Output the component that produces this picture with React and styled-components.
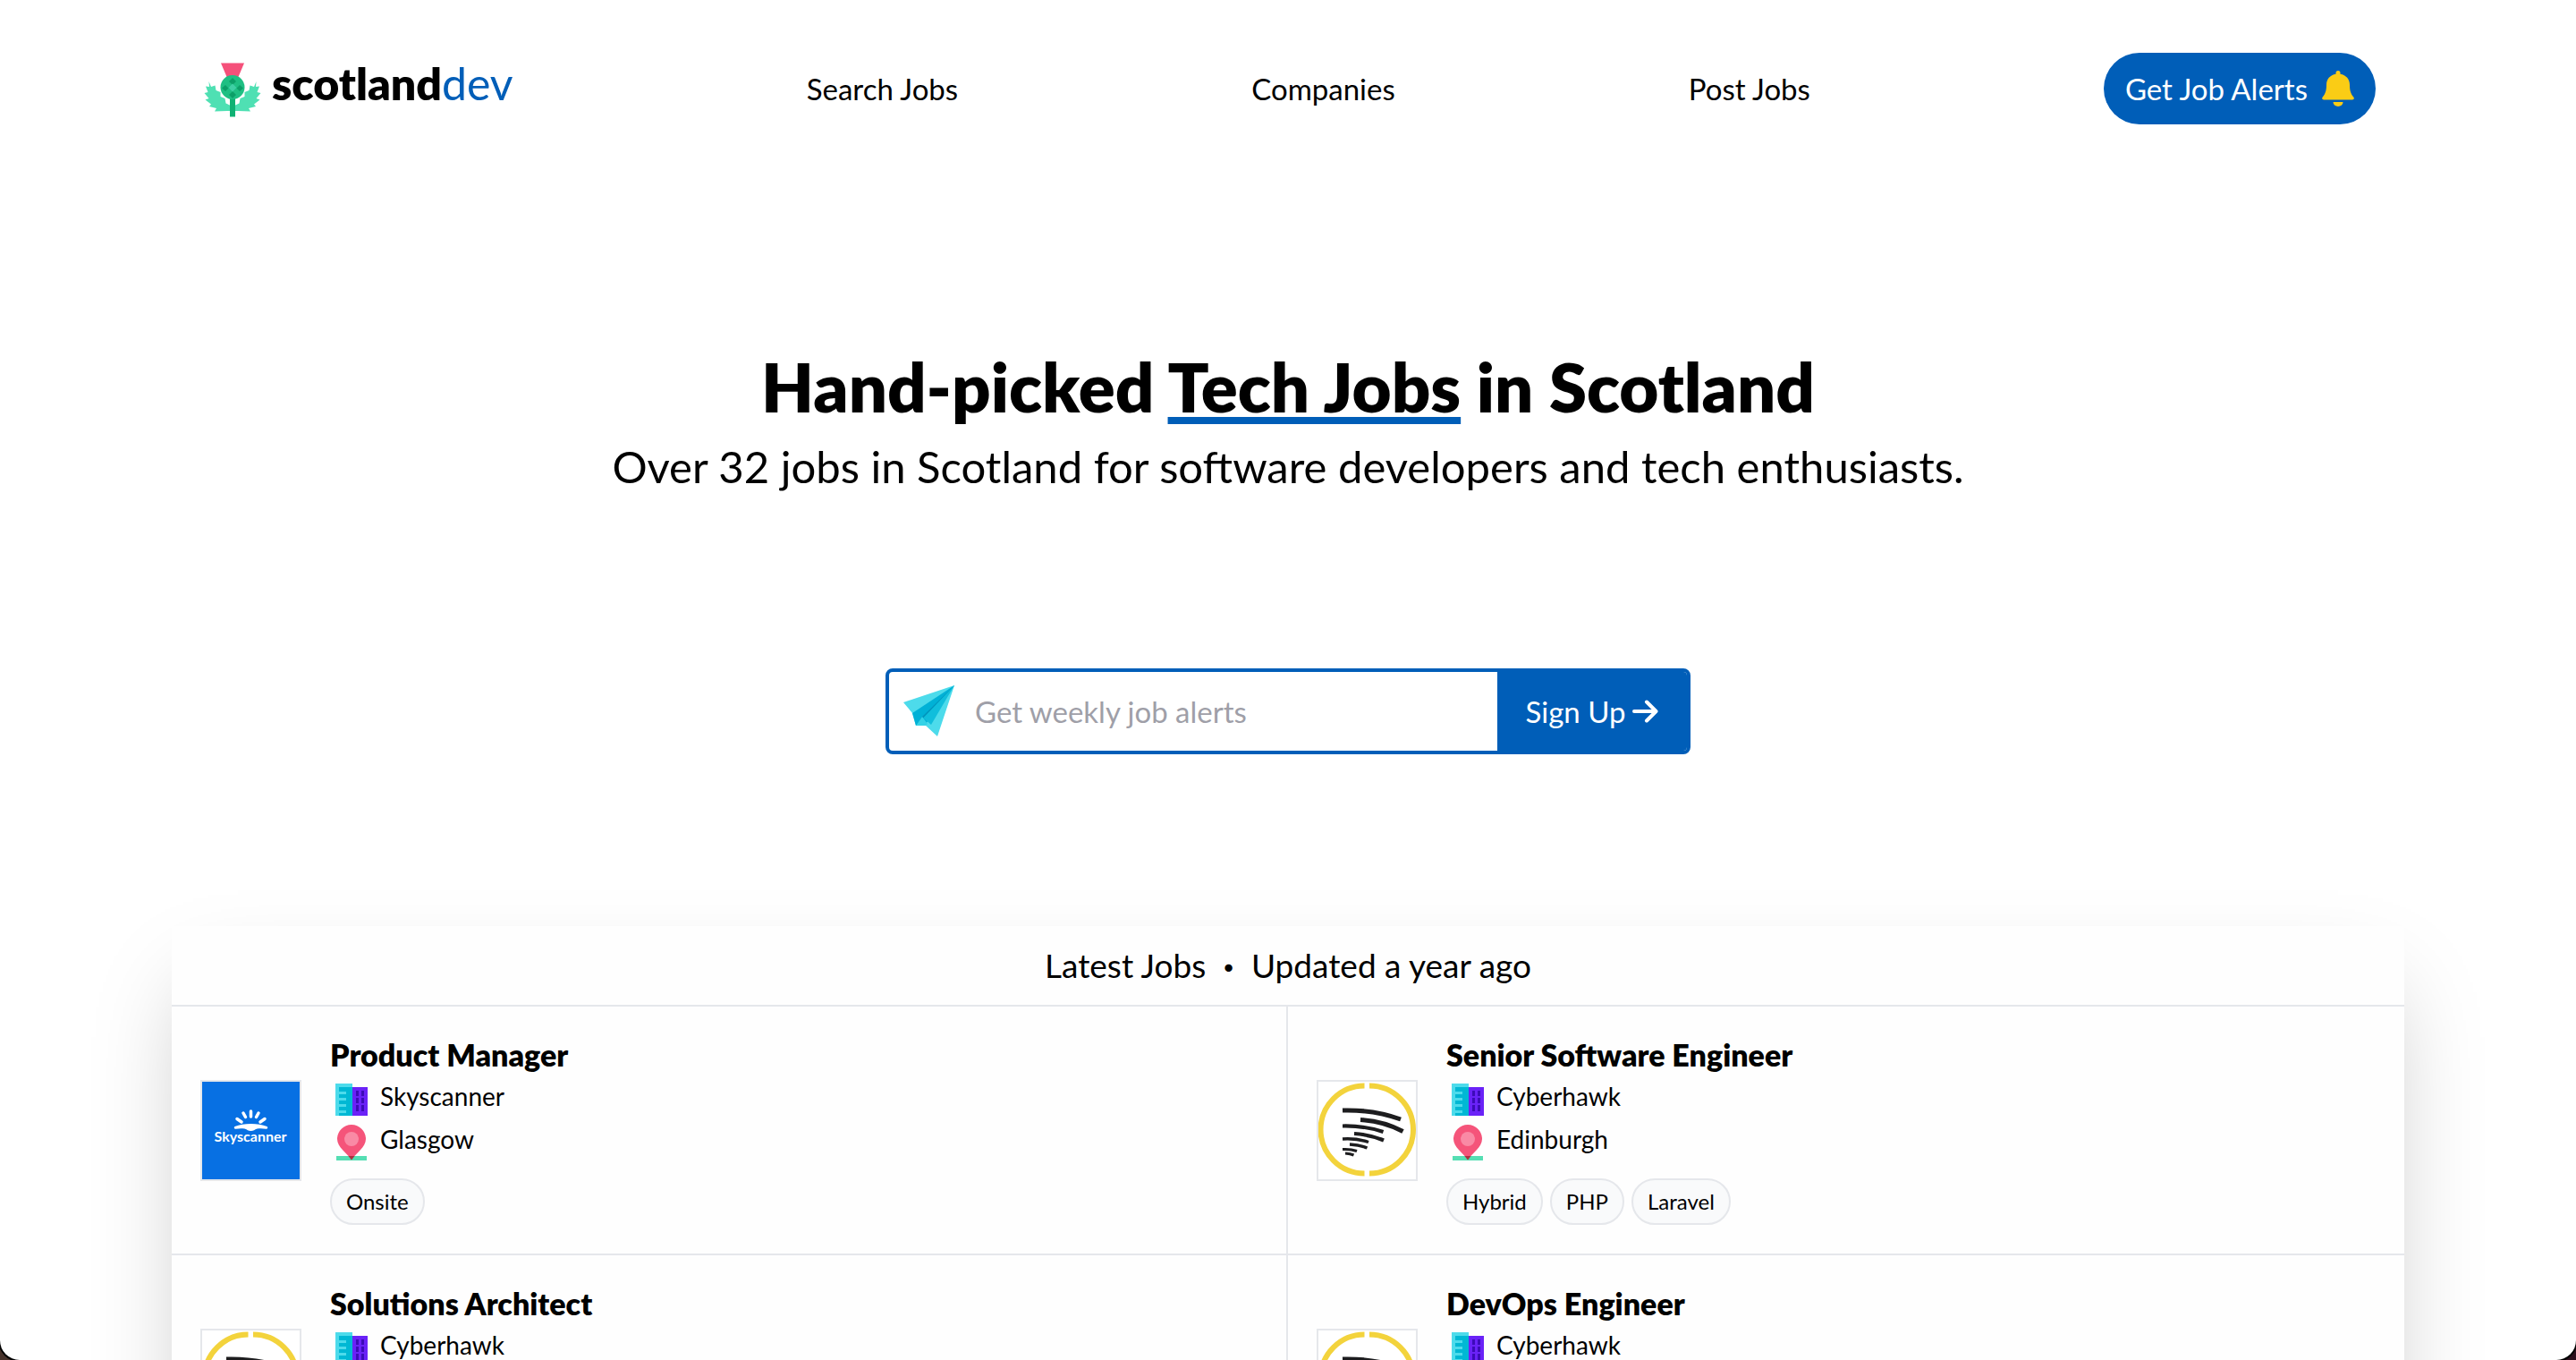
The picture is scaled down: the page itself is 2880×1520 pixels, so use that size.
import React from "react";
import styled, { createGlobalStyle } from "styled-components";

const blue = "#005eb8";
const line = "#e5e7eb";

const GlobalStyle = createGlobalStyle`
  *, *::before, *::after { box-sizing: border-box; }
  body {
    margin: 0;
    background: linear-gradient(90deg, #47332b, #2b0e1c);
    color: #000;
    font-family: Lato, "Noto Sans", sans-serif;
    font-size: 33px;
  }
  h1, h2, h3, p, ul { margin: 0; padding: 0; }
  ul { list-style: none; }
  a { color: inherit; text-decoration: none; }
  svg { display: block; flex: none; }
`;

const Window = styled.div`
  height: 100vh;
  overflow: hidden;
  background: #fff;
  border-radius: 0 0 22px 22px;
  box-shadow: 0 0 0 2px #000;
`;

const Header = styled.header`
  padding: 59px 224px 0;
`;

const Nav = styled.nav`
  display: flex;
  align-items: center;
  justify-content: space-between;
  height: 80px;
`;

const NavLink = styled.a`
  line-height: 48px;
`;

const Brand = styled.a`
  display: flex;
  align-items: flex-start;
  gap: 8px;
`;

const BrandName = styled.span`
  font-size: 50px;
  line-height: 60px;
  font-weight: 800;
`;

const BrandSuffix = styled.span`
  font-weight: 400;
  color: ${blue};
`;

const AlertsButton = styled.button`
  display: flex;
  align-items: center;
  gap: 16px;
  height: 80px;
  padding: 0 24px;
  border: 0;
  border-radius: 40px;
  background: ${blue};
  color: #fff;
  font: inherit;
`;

const Hero = styled.section`
  display: flex;
  flex-direction: column;
  align-items: center;
  padding-top: 253px;
  text-align: center;
`;

const Headline = styled.h1`
  font-size: 76px;
  line-height: 80px;
  font-weight: 800;
`;

const Marked = styled.span`
  text-decoration: underline ${blue} 8px;
  text-underline-offset: 5px;
  text-decoration-skip-ink: none;
`;

const Tagline = styled.p`
  margin-top: 12px;
  font-size: 49px;
  line-height: 74px;
`;

const SignUpForm = styled.form`
  display: flex;
  width: 900px;
  height: 96px;
  margin-top: 189px;
  border: 4px solid ${blue};
  border-radius: 8px;
  overflow: hidden;
`;

const EmailField = styled.label`
  display: flex;
  flex: 1;
  align-items: center;
  gap: 20px;
  padding-left: 16px;
`;

const EmailInput = styled.input`
  flex: 1;
  min-width: 0;
  height: 100%;
  padding: 0;
  border: 0;
  outline: 0;
  background: transparent;
  font: inherit;
  &::placeholder { color: #9f9fa8; opacity: 1; }
`;

const SubmitButton = styled.button`
  display: flex;
  align-items: center;
  justify-content: center;
  gap: 8px;
  width: 212px;
  border: 0;
  background: ${blue};
  color: #fff;
  font: inherit;
`;

const Board = styled.section`
  margin: 192px 192px 0;
  background: #fefefe;
  box-shadow: 0 50px 100px -24px rgba(0, 0, 0, 0.25);
`;

const BoardTitle = styled.h2`
  display: flex;
  justify-content: center;
  gap: 20px;
  padding: 16px 0;
  border-bottom: 2px solid ${line};
  font-size: 37px;
  line-height: 56px;
  font-weight: 400;
`;

const Dot = styled.span`
  font-weight: 800;
`;

const JobGrid = styled.ul`
  display: grid;
  grid-template-columns: 1fr 1fr;
`;

const JobCell = styled.li`
  border-bottom: 2px solid ${line};
  &:nth-child(odd) { border-right: 2px solid ${line}; }
`;

const JobLink = styled.a`
  display: flex;
  align-items: center;
  gap: 32px;
  padding: 32px;
`;

const LogoFrame = styled.span`
  border: 2px solid ${line};
  background: #fff;
`;

const JobTitle = styled.h3`
  font-size: 34px;
  line-height: 44px;
  font-weight: 800;
`;

const Detail = styled.p`
  display: flex;
  align-items: center;
  gap: 8px;
  height: 48px;
  font-size: 28px;
  line-height: 48px;
`;

const Tags = styled.ul`
  display: flex;
  gap: 8px;
  margin-top: 20px;
`;

const Tag = styled.li`
  padding: 0 16px;
  border: 2px solid ${line};
  border-radius: 26px;
  background: #f9fafb;
  font-size: 24px;
  line-height: 48px;
`;

const Thistle = () => (
  <svg width="72" height="72" viewBox="0 0 72 72" aria-hidden="true">
    <g fill="#4fe0b3">
      <path d="M9.500 28l2.500 6 4.500-1.500 1 5.500 5 2 0 5 5 2 1 5.500 6.500 3v5.500l-5 0-14 .5 2-3.500-8-2 2-2.500-6.500-5 4-1.500-5-6 4-1-2.500-6.500 4 .5z" />
      <path d="M62.500 28l-2.500 6-4.500-1.500-1 5.500-5 2 0 5-5 2-1 5.500-6.500 3v5.500l5 0 14 .5-2-3.500 8-2-2-2.500 6.500-5-4-1.500 5-6-4-1 2.500-6.500-4 .5z" />
    </g>
    <path d="M23 7.500h26L42 24H30z" fill="#f5507a" />
    <rect x="33" y="43" width="6" height="24.500" fill="#10b173" />
    <circle cx="36" cy="34.500" r="13.500" fill="#1fbf83" />
    <g fill="#0c9f68">
      <path d="M36 24l4 4-4 4-4-4zM28 32l3.500 3.500-3.500 3.500-4-3.500zM44 32l4 3.500-4 3.500-3.500-3.500zM36 39l4 4-4 4-4-4z" />
    </g>
    <path d="M36 30.500l4.500 4.500-4.500 4.500-4.500-4.500z" fill="#3fcfa4" />
  </svg>
);

const Bell = () => (
  <svg width="36" height="40" viewBox="0 0 36 40" aria-hidden="true" fill="#facc15">
    <path d="M18 0a2.500 2.500 0 0 1 2.500 2.500v1.300C27 5 31 9.500 31 16c0 7 1.500 10 4.300 13.500C36.500 31 35.500 32.500 34 32.500H2C.5 32.500-.5 31 .7 29.500 3.500 26 5 23 5 16 5 9.500 9 5 15.500 3.800V2.500A2.500 2.500 0 0 1 18 0z" />
    <path d="M12.500 35h11a5.500 5 0 0 1-11 0z" />
  </svg>
);

const PaperPlane = () => (
  <svg width="60" height="60" viewBox="0 0 60 60" aria-hidden="true">
    <path d="M0 20L57 1 38 58 25 46H14L10 32z" fill="#4ddbeb" />
    <path d="M57 1L10 32l4 14 11-2z" fill="#00b1d6" />
    <path d="M57 1L22 37l9 8z" fill="#10bedc" />
    <path d="M57 1L21 36 14 46z" fill="#0095bd" />
    <path d="M14 46l7-10 6 8-2 2z" fill="#33d2e6" />
  </svg>
);

const Arrow = () => (
  <svg width="29" height="28" viewBox="0 0 29 28" aria-hidden="true" fill="none" stroke="#fff" strokeWidth="4" strokeLinecap="round" strokeLinejoin="round">
    <path d="M2 14h24M16 3.500L26.500 14 16 24.500" />
  </svg>
);

const Building = () => (
  <svg width="48" height="48" viewBox="0 0 48 48" aria-hidden="true">
    <path d="M6 10h19v36H6z" fill="#4ddbeb" />
    <path d="M10 14h15v32H10z" fill="#00b8d4" />
    <path d="M10 19h8v3h-8zM10 26h8v3h-8zM10 33h8v3h-8zM10 40h8v3h-8z" fill="#4ddbeb" />
    <path d="M25 14h17v32H25z" fill="#6a22f7" />
    <path d="M29 18h3v6h-3zM35 18h3v6h-3zM29 26h3v6h-3zM35 26h3v6h-3zM29 34h3v7h-3zM35 34h3v7h-3z" fill="#3d0bb8" />
  </svg>
);

const Pin = () => (
  <svg width="48" height="48" viewBox="0 0 48 48" aria-hidden="true">
    <path d="M7 43h34v5H7z" fill="#55deb3" />
    <path d="M24 8a16 16 0 0 1 16 16c0 9-11 16-16 23C19 40 8 33 8 24A16 16 0 0 1 24 8z" fill="#f5547a" />
    <path d="M20.500 43h7L24 47.500z" fill="#a8323f" />
    <circle cx="24" cy="24" r="8" fill="#f98aa5" />
  </svg>
);

const SkyText = styled.text`
  font-size: 16px;
  font-weight: 700;
`;

const SkyscannerLogo = () => (
  <svg width="109" height="109" viewBox="0 0 109 109" role="img" aria-label="Skyscanner logo">
    <path d="M0 0h109v109H0z" fill="#0770e3" />
    <g stroke="#fff" strokeWidth="3.500" strokeLinecap="round">
      <path d="M54.500 33v6M46 35l2.500 4.500M63 35l-2.500 4.500M39 41.500l5 3.500M70 41.500l-5 3.500" />
    </g>
    <path d="M36.500 50c10-4 26-4 36 0 1.500 1 .5 3-1 2.700-4-.7-7-.7-10-.2-3 1-4 2.500-7 2.500s-4-1.500-7-2.500c-3-.5-6-.5-10 .2-1.500.3-2.500-1.700-1-2.700z" fill="#fff" />
    <SkyText x="54" y="67" textAnchor="middle" fill="#fff">Skyscanner</SkyText>
  </svg>
);

const CyberhawkLogo = () => (
  <svg width="109" height="109" viewBox="2 2 109 109" role="img" aria-label="Cyberhawk logo">
    <g fill="none" stroke="#f3d33c" strokeWidth="6">
      <path d="M53.500 6.500a49 49 0 0 0 0 98M59 6.500a49 49 0 0 1 0 98" />
    </g>
    <g fill="none" stroke="#1d1d1f" strokeWidth="5">
      <path d="M29 34Q64 33 94 44M49 44.500Q75 46 96.500 57.500" />
      <path d="M29 51.500Q54 51 74.500 58M42 60Q60 61 75 67.500" strokeWidth="4.200" />
      <path d="M29 66Q45 65 58 69.500M37 72Q48 72.500 56.500 76" strokeWidth="3.400" />
      <path d="M29 77.500Q38 77 45 79.500M32 82Q38 82.500 41.500 84" strokeWidth="3" />
    </g>
  </svg>
);

const logos = { Skyscanner: SkyscannerLogo, Cyberhawk: CyberhawkLogo };

const jobs = [
  { title: "Product Manager", company: "Skyscanner", place: "Glasgow", tags: ["Onsite"] },
  { title: "Senior Software Engineer", company: "Cyberhawk", place: "Edinburgh", tags: ["Hybrid", "PHP", "Laravel"] },
  { title: "Solutions Architect", company: "Cyberhawk", place: "Edinburgh", tags: ["Hybrid"] },
  { title: "DevOps Engineer", company: "Cyberhawk", place: "Edinburgh", tags: ["Hybrid"] },
];

function Job({ title, company, place, tags }) {
  const Logo = logos[company];
  return (
    <JobCell>
      <JobLink href="#">
        <LogoFrame><Logo /></LogoFrame>
        <div>
          <JobTitle>{title}</JobTitle>
          <Detail><Building />{company}</Detail>
          <Detail><Pin />{place}</Detail>
          <Tags>{tags.map((tag) => <Tag key={tag}>{tag}</Tag>)}</Tags>
        </div>
      </JobLink>
    </JobCell>
  );
}

export default function App() {
  return (
    <>
      <GlobalStyle />
      <Window>
        <Header>
          <Nav>
            <Brand href="#">
              <Thistle />
              <BrandName>scotland<BrandSuffix>dev</BrandSuffix></BrandName>
            </Brand>
            <NavLink href="#">Search Jobs</NavLink>
            <NavLink href="#">Companies</NavLink>
            <NavLink href="#">Post Jobs</NavLink>
            <AlertsButton type="button">Get Job Alerts<Bell /></AlertsButton>
          </Nav>
        </Header>
        <main>
          <Hero>
            <Headline>Hand-picked <Marked>Tech Jobs</Marked> in Scotland</Headline>
            <Tagline>Over 32 jobs in Scotland for software developers and tech enthusiasts.</Tagline>
            <SignUpForm onSubmit={(e) => e.preventDefault()}>
              <EmailField>
                <PaperPlane />
                <EmailInput type="email" placeholder="Get weekly job alerts" aria-label="Email address" />
              </EmailField>
              <SubmitButton type="submit">Sign Up<Arrow /></SubmitButton>
            </SignUpForm>
          </Hero>
          <Board>
            <BoardTitle><span>Latest Jobs</span><Dot>·</Dot><span>Updated a year ago</span></BoardTitle>
            <JobGrid>{jobs.map((job) => <Job key={job.title} {...job} />)}</JobGrid>
          </Board>
        </main>
      </Window>
    </>
  );
}
